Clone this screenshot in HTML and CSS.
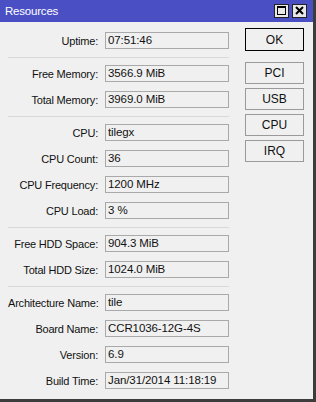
FILE: index.html
```html
<!DOCTYPE html>
<html lang="en">
<head>
  <meta charset="UTF-8" />
  <title>Resources</title>
  <link rel="stylesheet" href="styles.css">
</head>
<body>
  <div class="window">
    <div class="titlebar">
      <span class="title">Resources</span>
      <div class="title-buttons">
        <span class="tbtn">
          <svg width="13" height="12" viewBox="0 0 13 12"><rect x="2.5" y="1.5" width="8" height="8" fill="none" stroke="#000" stroke-width="1"/><line x1="2.5" y1="2.5" x2="10.5" y2="2.5" stroke="#000" stroke-width="1"/></svg>
        </span>
        <span class="tbtn">
          <svg width="13" height="12" viewBox="0 0 13 12"><path d="M3 2 L10 9 M10 2 L3 9" stroke="#000" stroke-width="2"/></svg>
        </span>
      </div>
    </div>

    <div class="content">
      <div class="form">
        <div class="group">
          <div class="row"><label>Uptime:</label><div class="field">07:51:46</div></div>
        </div>
        <div class="group">
          <div class="row"><label>Free Memory:</label><div class="field">3566.9 MiB</div></div>
          <div class="row"><label>Total Memory:</label><div class="field">3969.0 MiB</div></div>
        </div>
        <div class="group">
          <div class="row"><label>CPU:</label><div class="field">tilegx</div></div>
          <div class="row"><label>CPU Count:</label><div class="field">36</div></div>
          <div class="row"><label>CPU Frequency:</label><div class="field">1200 MHz</div></div>
          <div class="row"><label>CPU Load:</label><div class="field">3 %</div></div>
        </div>
        <div class="group">
          <div class="row"><label>Free HDD Space:</label><div class="field">904.3 MiB</div></div>
          <div class="row"><label>Total HDD Size:</label><div class="field">1024.0 MiB</div></div>
        </div>
        <div class="group last">
          <div class="row"><label>Architecture Name:</label><div class="field">tile</div></div>
          <div class="row"><label>Board Name:</label><div class="field">CCR1036-12G-4S</div></div>
          <div class="row"><label>Version:</label><div class="field">6.9</div></div>
          <div class="row"><label>Build Time:</label><div class="field">Jan/31/2014 11:18:19</div></div>
        </div>
      </div>

      <div class="actions">
        <button class="btn default">OK</button>
        <button class="btn">PCI</button>
        <button class="btn">USB</button>
        <button class="btn">CPU</button>
        <button class="btn">IRQ</button>
      </div>
    </div>
  </div>
</body>
</html>
```

FILE: styles.css
```css
:root {
  --title-bg: #4b4fc4;
  --window-bg: #f0f0f0;
  --frame: #3c3c3c;
  --field-border: #a9a9a9;
  --sep: #d9d9d9;
  --text: #111;
}

body {
  margin: 0;
  font-family: "Liberation Sans", Arial, sans-serif;
  font-size: 12px;
  color: var(--text);
  background: var(--window-bg);
}

.window {
  width: 316px;
  height: 402px;
  box-sizing: border-box;
  background: var(--window-bg);
  border-right: 3px solid var(--frame);
  border-bottom: 3px solid var(--frame);
}

.titlebar {
  height: 22px;
  background: var(--title-bg);
  display: flex;
  align-items: center;
  justify-content: space-between;
  padding: 0 6px 0 5px;
}

.title {
  color: #fff;
  font-size: 11.5px;
  letter-spacing: -0.2px;
}

.title-buttons {
  display: flex;
  gap: 3px;
}

.tbtn {
  width: 13px;
  height: 12px;
  background: #e8e8e8;
  border: 1px solid #222;
  display: flex;
}

.content {
  display: flex;
  align-items: flex-start;
  padding: 6px 0 0 8px;
}

.form {
  width: 221px;
  padding-top: 4px;
}

.group {
  display: flex;
  flex-direction: column;
  gap: 9px;
  padding: 0 0 8px;
  margin-bottom: 7px;
  border-bottom: 1px solid var(--sep);
}

.group.last {
  border-bottom: none;
}

.row {
  display: flex;
  align-items: center;
  gap: 7px;
}

.row label {
  width: 90px;
  text-align: right;
  white-space: nowrap;
  font-size: 11px;
  letter-spacing: -0.2px;
}

.field {
  width: 124px;
  height: 17px;
  box-sizing: border-box;
  border: 1px solid var(--field-border);
  background: var(--window-bg);
  padding: 0 2px;
  font-size: 11.5px;
  letter-spacing: -0.1px;
  line-height: 15px;
  white-space: nowrap;
}

.actions {
  margin-left: 16px;
  display: flex;
  flex-direction: column;
  gap: 4px;
}

.btn {
  width: 59px;
  height: 22px;
  font-family: inherit;
  font-size: 12px;
  color: var(--text);
  background: var(--window-bg);
  border: 1px solid #9a9a9a;
  padding: 0;
}

.btn.default {
  height: 23px;
  border-color: #000;
  margin-bottom: 7px;
}
```
